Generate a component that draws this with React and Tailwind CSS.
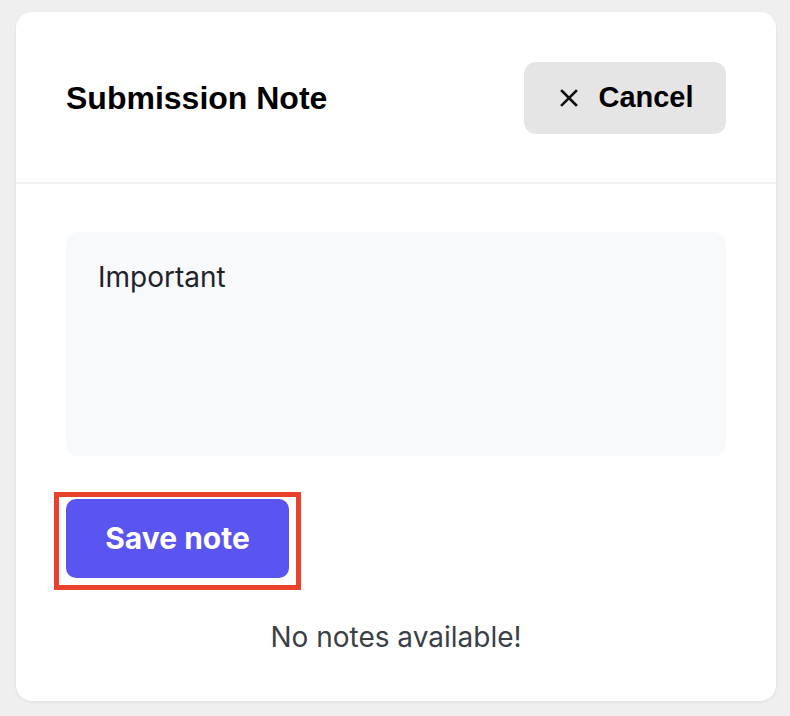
import React, { useState } from "react";

const XIcon = () => (
  <svg width="18" height="18" viewBox="0 0 18 18" fill="none" className="shrink-0">
    <path d="M2 2L16 16M16 2L2 16" stroke="#111" strokeWidth="2.6" strokeLinecap="square" />
  </svg>
);

export default function App() {
  const [note, setNote] = useState("Important");

  return (
    <div className="min-h-[716px] bg-[#efefef] pt-3 pr-[14px] pb-[15px] pl-4">
      <div className="flex h-[689px] flex-col rounded-2xl bg-white shadow-[0_1px_3px_rgba(0,0,0,0.08)]">
        {/* header */}
        <div className="flex items-center justify-between border-b-2 border-[#f0f1f3] px-[50px] pt-[50px] pb-[48px]">
          <h2 className="font-['Liberation_Sans',Arial,sans-serif] text-[32px] leading-none font-bold text-black">
            Submission Note
          </h2>
          <button className="flex h-[72px] w-[202px] items-center justify-center gap-[20px] rounded-xl bg-[#e5e5e5] pl-1 font-['Liberation_Sans',Arial,sans-serif] text-[29px] font-bold text-black">
            <XIcon />
            Cancel
          </button>
        </div>

        {/* body */}
        <div className="flex flex-1 flex-col px-[50px] pt-[48px] font-['Inter',sans-serif]">
          <textarea
            value={note}
            onChange={(e) => setNote(e.target.value)}
            className="h-[224px] w-full resize-none rounded-xl bg-[#f8f9fb] px-8 pt-[27px] text-[28px] leading-[36px] text-[#1f2329] outline-none"
          />

          <div className="relative mt-[43px] self-start">
            <button className="flex h-[79px] w-[223px] items-center justify-center rounded-[10px] bg-[#5a54f0] text-[30px] font-bold text-white">
              Save note
            </button>
            <div className="pointer-events-none absolute -top-[7px] -bottom-[12px] -left-[12px] -right-[12px] border-[5px] border-[#e8412c]" />
          </div>

          <p className="mt-[38px] text-center text-[28px] text-[#3b3f46]">No notes available!</p>
        </div>
      </div>
    </div>
  );
}
